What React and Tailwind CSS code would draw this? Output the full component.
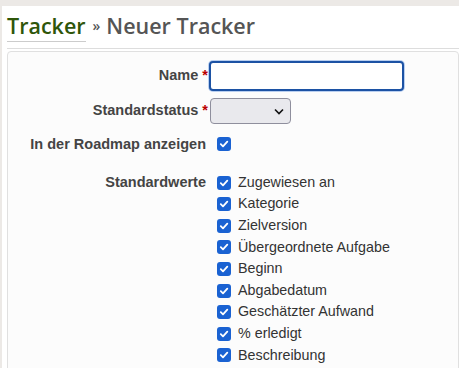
import React from "react";

const items = [
  "Zugewiesen an",
  "Kategorie",
  "Zielversion",
  "Übergeordnete Aufgabe",
  "Beginn",
  "Abgabedatum",
  "Geschätzter Aufwand",
  "% erledigt",
  "Beschreibung",
];

function Check() {
  return (
    <span className="inline-flex h-[14px] w-[14px] shrink-0 items-center justify-center rounded-[3px] bg-[#1a62d2]">
      <svg width="10" height="10" viewBox="0 0 10 10">
        <path d="M1.8 5.2 L4 7.3 L8.3 2.6" fill="none" stroke="white" strokeWidth="1.8" strokeLinecap="round" strokeLinejoin="round" />
      </svg>
    </span>
  );
}

export default function App() {
  return (
    <div className="h-[368px] w-[459px] overflow-hidden bg-[#ece9e6] pl-[2px] pt-[6px]" style={{ fontFamily: '"Liberation Sans", Arial, sans-serif' }}>
      <div className="h-[420px] bg-white pl-[5px]">
        <h2 className="flex items-end border-b border-[#dddddd] pb-[6px] pt-[8px] text-[21.5px] font-bold leading-[24px] text-[#555555]" style={{ fontFamily: '"Open Sans", Lato, sans-serif', fontWeight: 600 }}>
          <span className="border-b border-[#cccccc] pb-[3px] text-[#2f560a]">Tracker</span>
          <span className="pb-[4px] pl-[7px] pr-[6px] text-[14px]">»</span>
          <span className="pb-[4px]">Neuer Tracker</span>
        </h2>
        <div className="mt-[2px] h-[400px] rounded-[4px] border border-[#e0e0e0] bg-[#fcfcfc] pt-[9px] text-[14.3px] text-[#333333]">
          <div className="flex items-center">
            <div className="w-[200px] text-right text-[14.5px] font-bold text-[#444444]">
              Name <span className="text-[#bb0000]">*</span>
            </div>
            <div className="ml-[1px] h-[30px] w-[195px] rounded-[4px] border-2 border-[#1c52a4] bg-white shadow-[0_0_0_1px_#b9cff0]" />
          </div>
          <div className="mt-[7px] flex items-center">
            <div className="w-[200px] text-right text-[14.5px] font-bold text-[#444444]">
              Standardstatus <span className="text-[#bb0000]">*</span>
            </div>
            <div className="ml-[2px] flex h-[26px] w-[81px] items-center justify-end rounded-[4px] border border-[#8f8f9d] bg-[#e9e9ed] pr-[6px]">
              <svg width="10" height="7" viewBox="0 0 10 7">
                <path d="M1 1.5 L5 5.5 L9 1.5" fill="none" stroke="#111" strokeWidth="1.6" />
              </svg>
            </div>
          </div>
          <div className="mt-[10px] flex items-center">
            <div className="w-[198px] text-right text-[14.5px] font-bold text-[#444444]">In der Roadmap anzeigen</div>
            <div className="ml-[11px]"><Check /></div>
          </div>
          <div className="mt-[16px] flex items-start">
            <div className="w-[198px] text-right text-[14.5px] font-bold leading-[21.6px] text-[#444444]">Standardwerte</div>
            <div className="ml-[11px] flex flex-col">
              {items.map((t) => (
                <div key={t} className="flex h-[21.6px] items-center">
                  <Check />
                  <span className="ml-[7px] leading-[21.6px]">{t}</span>
                </div>
              ))}
            </div>
          </div>
        </div>
      </div>
    </div>
  );
}
